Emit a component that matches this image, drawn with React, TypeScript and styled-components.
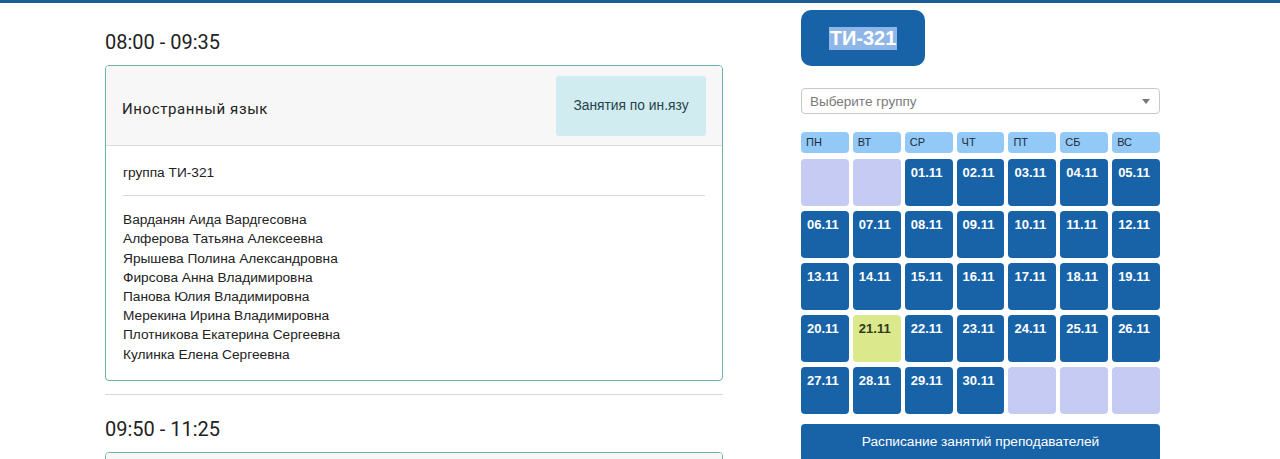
import React from "react";
import styled, { createGlobalStyle } from "styled-components";

const Global = createGlobalStyle`
  html, body { margin: 0; padding: 0; background: #fff; }
  body { font-family: "Liberation Sans", Arial, sans-serif; color: #222; }
  * { box-sizing: border-box; }
`;

const TopBar = styled.div`
  height: 3px;
  background: #1b5b98;
`;

const Page = styled.div`
  display: flex;
  align-items: flex-start;
  gap: 78px;
  padding-left: 105px;
`;

const LeftCol = styled.div`
  width: 618px;
  display: flex;
  flex-direction: column;
`;

const TimeTitle = styled.h3<{ $first?: boolean }>`
  margin: ${(p) => (p.$first ? "27px" : "22px")} 0 11px;
  font-family: Roboto, "Liberation Sans", sans-serif;
  font-weight: 400;
  font-size: 20px;
  line-height: 24px;
  color: #222;
`;

const Card = styled.div`
  border: 1px solid #6cb2ac;
  border-radius: 4px;
  overflow: hidden;
`;

const CardHeader = styled.div`
  height: 80px;
  background: #f7f7f7;
  border-bottom: 1px solid #dcdcdc;
  display: flex;
  align-items: center;
  justify-content: space-between;
  padding: 0 16px;
`;

const Subject = styled.div`
  margin-top: 6px;
  font-family: Roboto, "Liberation Sans", sans-serif;
  font-size: 15px;
  letter-spacing: 0.6px;
  color: #222;
`;

const Badge = styled.div`
  width: 150px;
  height: 60px;
  background: #d1ecf1;
  border-radius: 3px;
  display: flex;
  align-items: center;
  justify-content: center;
  font-size: 13.8px;
  color: #25434a;
`;

const CardBody = styled.div`
  padding: 17px 17px 16px;
  font-size: 13.7px;
  line-height: 19.2px;
  color: #222;
`;

const Rule = styled.hr`
  border: 0;
  border-top: 1px solid #d8d8d8;
  margin: 13px 0 14px;
`;

const Separator = styled.hr`
  border: 0;
  border-top: 1px solid #d8d8d8;
  margin: 13px 0 0;
  width: 100%;
`;

const RightCol = styled.div`
  width: 359px;
  display: flex;
  flex-direction: column;
  align-items: flex-start;
  padding-top: 7px;
`;

const GroupButton = styled.div`
  width: 124px;
  height: 56px;
  border-radius: 10px;
  background: #1862a8;
  display: flex;
  align-items: center;
  justify-content: center;
  font-size: 20px;
  font-weight: 700;
  color: #fff;
`;

const Selected = styled.span`
  background: #8fb6e8;
  line-height: 23px;
  padding: 0 1px;
`;

const Select = styled.div`
  margin-top: 22px;
  width: 100%;
  height: 26px;
  border: 1px solid #c8c8c8;
  border-radius: 4px;
  display: flex;
  align-items: center;
  justify-content: space-between;
  padding: 0 8px;
  font-size: 13.5px;
  color: #7a7a7a;
`;

const Arrow = styled.span`
  width: 0;
  height: 0;
  border-left: 4px solid transparent;
  border-right: 4px solid transparent;
  border-top: 5px solid #777;
  margin-right: 1px;
`;

const Calendar = styled.div`
  margin-top: 18px;
  width: 100%;
  display: grid;
  grid-template-columns: repeat(7, 1fr);
  grid-template-rows: 22px;
  grid-auto-rows: 47px;
  gap: 5px 4px;
`;

const DayName = styled.div`
  background: #93c9f7;
  border-radius: 4px;
  font-size: 11px;
  color: #1d2b3a;
  padding: 4px 5px 0;
  margin-bottom: 1px;
`;

type CellKind = "date" | "empty" | "today";

const Cell = styled.div<{ $kind: CellKind }>`
  border-radius: 4px;
  padding: 6px 6px 0;
  font-size: 13px;
  font-weight: 700;
  background: ${(p) =>
    p.$kind === "empty" ? "#c5cbf2" : p.$kind === "today" ? "#dbe98c" : "#1862a8"};
  color: ${(p) => (p.$kind === "today" ? "#2e3a1c" : "#fff")};
`;

const WideButton = styled.div`
  margin-top: 10px;
  width: 100%;
  height: 38px;
  border-radius: 4px;
  background: #1862a8;
  color: #fff;
  font-size: 13.7px;
  display: flex;
  align-items: center;
  justify-content: center;
  padding-bottom: 4px;
`;

const students = [
  "Варданян Аида Вардгесовна",
  "Алферова Татьяна Алексеевна",
  "Ярышева Полина Александровна",
  "Фирсова Анна Владимировна",
  "Панова Юлия Владимировна",
  "Мерекина Ирина Владимировна",
  "Плотникова Екатерина Сергеевна",
  "Кулинка Елена Сергеевна",
];

const days = ["ПН", "ВТ", "СР", "ЧТ", "ПТ", "СБ", "ВС"];

const cells: { label: string; kind: CellKind }[] = [
  { label: "", kind: "empty" },
  { label: "", kind: "empty" },
  ...Array.from({ length: 30 }, (_, i) => {
    const d = i + 1;
    return {
      label: `${String(d).padStart(2, "0")}.11`,
      kind: (d === 21 ? "today" : "date") as CellKind,
    };
  }),
  { label: "", kind: "empty" },
  { label: "", kind: "empty" },
  { label: "", kind: "empty" },
];

export default function App() {
  return (
    <>
      <Global />
      <TopBar />
      <Page>
        <LeftCol>
          <TimeTitle $first>08:00 - 09:35</TimeTitle>
          <Card>
            <CardHeader>
              <Subject>Иностранный язык</Subject>
              <Badge>Занятия по ин.язу</Badge>
            </CardHeader>
            <CardBody>
              <div>группа ТИ-321</div>
              <Rule />
              {students.map((s) => (
                <div key={s}>{s}</div>
              ))}
            </CardBody>
          </Card>
          <Separator />
          <TimeTitle>09:50 - 11:25</TimeTitle>
          <Card>
            <CardHeader />
          </Card>
        </LeftCol>
        <RightCol>
          <GroupButton>
            <Selected>ТИ-321</Selected>
          </GroupButton>
          <Select>
            <span>Выберите группу</span>
            <Arrow />
          </Select>
          <Calendar>
            {days.map((d) => (
              <DayName key={d}>{d}</DayName>
            ))}
            {cells.map((c, i) => (
              <Cell key={i} $kind={c.kind}>
                {c.label}
              </Cell>
            ))}
          </Calendar>
          <WideButton>Расписание занятий преподавателей</WideButton>
        </RightCol>
      </Page>
    </>
  );
}
